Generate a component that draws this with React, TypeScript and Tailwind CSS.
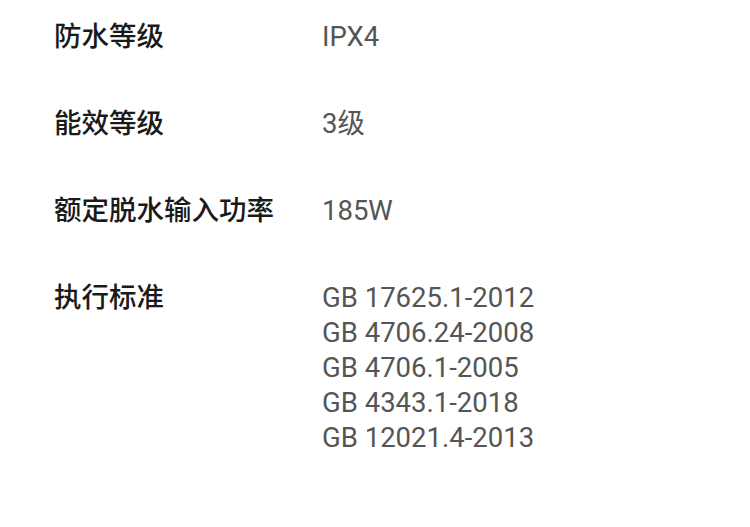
const rows: { label: string; values: string[] }[] = [
  { label: '防水等级', values: ['IPX4'] },
  { label: '能效等级', values: ['3级'] },
  { label: '额定脱水输入功率', values: ['185W'] },
  {
    label: '执行标准',
    values: ['GB 17625.1-2012', 'GB 4706.24-2008', 'GB 4706.1-2005', 'GB 4343.1-2018', 'GB 12021.4-2013'],
  },
]

export default function App() {
  return (
    <div className="w-[750px] h-[527px] bg-white pl-[54px] pt-[19px] flex flex-col gap-[52px] font-['Roboto','Noto_Sans_CJK_SC',sans-serif]">
      {rows.map((row) => (
        <div key={row.label} className="flex items-start">
          <div className="w-[268px] text-[27.5px] leading-[35px] font-medium text-[#1a1a1a]">{row.label}</div>
          <div className="flex flex-col text-[27.5px] leading-[35px] text-[#555555]">
            {row.values.map((v) => (
              <span key={v}>{v}</span>
            ))}
          </div>
        </div>
      ))}
    </div>
  )
}
